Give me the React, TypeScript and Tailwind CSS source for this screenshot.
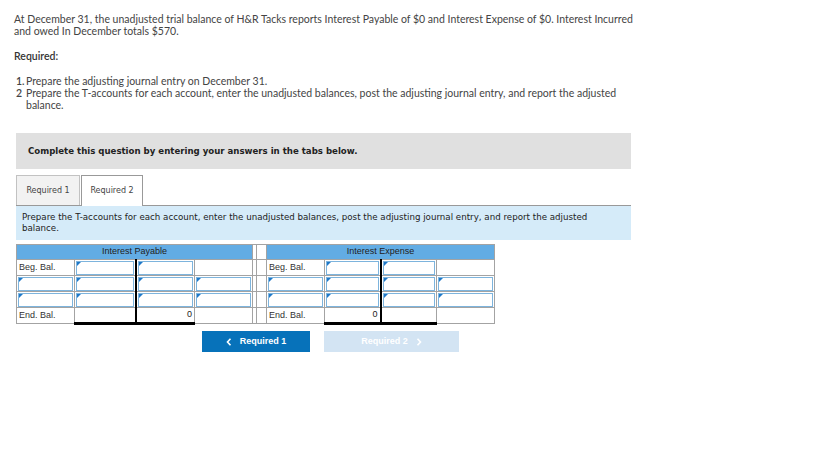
import React from 'react'

const body = { fontFamily: '"Lato", "Open Sans", sans-serif' }
const verdana = { fontFamily: '"DejaVu Sans", Verdana, sans-serif' }
const arial = { fontFamily: '"Liberation Sans", Arial, sans-serif' }

const InputBox = ({ value }: { value?: string }) => (
    <div className="relative h-[14px] mx-[1px] border border-[#7db4dd] bg-white text-right pr-[2px] leading-[12px]">
        <span className="absolute left-0 top-0 w-0 h-0 border-t-[4px] border-r-[4px] border-t-[#1f78c8] border-r-transparent" />
        {value}
    </div>
)

type Cell = { kind: 'label' | 'input' | 'empty' | 'value'; text?: string }

const Row = ({ cells, last }: { cells: Cell[]; last?: boolean }) => (
    <>
        {cells.map((c, i) => {
            const blackRight = i === 1 || i === 7
            const thickBottom = last && (i === 1 || i === 2 || i === 7 || i === 8)
            const gap = i === 4 || i === 5
            return (
                <td
                    key={i}
                    className={`h-4 p-0 border-[#a3a3a3] border ${blackRight ? 'border-r-2 border-r-black' : ''} ${thickBottom ? 'border-b-[3px] border-b-black' : ''} ${gap ? 'bg-white' : ''}`}
                >
                    {c.kind === 'label' && <span className="pl-[2px] text-[#333]">{c.text}</span>}
                    {c.kind === 'input' && <InputBox />}
                    {c.kind === 'value' && <div className="text-right pr-[2px]">{c.text}</div>}
                </td>
            )
        })}
    </>
)

const L = (t: string): Cell => ({ kind: 'label', text: t })
const I: Cell = { kind: 'input' }
const E: Cell = { kind: 'empty' }
const V = (t: string): Cell => ({ kind: 'value', text: t })

const App = () => {
    return (
        <div className="w-[830px] h-[461px] bg-white text-[#444]" style={body}>
            <div className="pl-[14px] pt-[13px] pr-4 text-[10.5px] leading-[12px]">
                <p>
                    At December 31, the unadjusted trial balance of H&amp;R Tacks reports Interest Payable of $0 and Interest Expense of $0. Interest Incurred
                    <br />
                    and owed In December totals $570.
                </p>
                <p className="mt-[13px] font-semibold text-[#333]">Required:</p>
                <ol className="mt-[13px] pl-[2px]">
                    <li className="flex">
                        <span className="w-[10px] shrink-0 font-semibold">1.</span>
                        <span>Prepare the adjusting journal entry on December 31.</span>
                    </li>
                    <li className="flex">
                        <span className="w-[10px] shrink-0 font-semibold">2</span>
                        <span>
                            Prepare the T-accounts for each account, enter the unadjusted balances, post the adjusting journal entry, and report the adjusted
                            <br />
                            balance.
                        </span>
                    </li>
                </ol>
            </div>

            <div className="ml-4 w-[615px] mt-[22px]">
                <div className="h-9 bg-[#e0e0e0] flex items-center pl-3 text-[8.6px] font-bold text-[#222]" style={verdana}>
                    Complete this question by entering your answers in the tabs below.
                </div>

                <div className="flex items-end mt-[6px] h-[31px] border-b border-[#999]" style={verdana}>
                    <div className="h-[30px] w-16 flex items-center justify-center bg-[#f2f2f2] border border-b-0 border-[#c2c2c2] text-[8px] text-[#444]">
                        Required 1
                    </div>
                    <div className="h-[31px] w-[62px] ml-[1px] -mb-px flex items-center justify-center bg-white border border-b-0 border-[#999] text-[8px] text-[#444]">
                        Required 2
                    </div>
                </div>

                <div className="bg-[#d5ebf9] h-[34px] pl-[6px] pt-[6px] text-[8.7px] leading-[11px] text-[#222]" style={verdana}>
                    Prepare the T-accounts for each account, enter the unadjusted balances, post the adjusting journal entry, and report the adjusted
                    <br />
                    balance.
                </div>

                <table className="mt-[4px] border-collapse table-fixed text-[9px] text-[#222]" style={arial}>
                    <colgroup>
                        <col className="w-[58px]" />
                        <col className="w-[61px]" />
                        <col className="w-[59px]" />
                        <col className="w-[58px]" />
                        <col className="w-[4px]" />
                        <col className="w-[10px]" />
                        <col className="w-[58px]" />
                        <col className="w-[56px]" />
                        <col className="w-[56px]" />
                        <col className="w-[58px]" />
                    </colgroup>
                    <tbody>
                        <tr>
                            <td colSpan={4} className="h-[15px] p-0 bg-[#62ace4] border border-[#a3a3a3] text-center">
                                Interest Payable
                            </td>
                            <td className="p-0 border border-[#a3a3a3]" />
                            <td className="p-0 border border-[#a3a3a3]" />
                            <td colSpan={4} className="h-[15px] p-0 bg-[#62ace4] border border-[#a3a3a3] text-center">
                                Interest Expense
                            </td>
                        </tr>
                        <tr>
                            <Row cells={[L('Beg. Bal.'), I, I, E, E, E, L('Beg. Bal.'), I, I, E]} />
                        </tr>
                        <tr>
                            <Row cells={[I, I, I, I, E, E, I, I, I, I]} />
                        </tr>
                        <tr>
                            <Row cells={[I, I, I, I, E, E, I, I, I, I]} />
                        </tr>
                        <tr>
                            <Row last cells={[L('End. Bal.'), E, V('0'), E, E, E, L('End. Bal.'), V('0'), E, E]} />
                        </tr>
                    </tbody>
                </table>

                <div className="flex mt-[6px] ml-[186px] gap-[14px]" style={arial}>
                    <button className="w-[108px] h-[21px] bg-[#0772ba] text-white text-[9px] font-bold flex items-center justify-center gap-2">
                        <svg width="6" height="8" viewBox="0 0 6 8" fill="none">
                            <path d="M4.5 0.8 L1.5 4 L4.5 7.2" stroke="white" strokeWidth="1.6" />
                        </svg>
                        Required 1
                    </button>
                    <button className="w-[135px] h-[21px] bg-[#d3e4f3] text-white text-[9px] font-bold flex items-center justify-center gap-2">
                        Required 2
                        <svg width="6" height="8" viewBox="0 0 6 8" fill="none">
                            <path d="M1.5 0.8 L4.5 4 L1.5 7.2" stroke="white" strokeWidth="1.6" />
                        </svg>
                    </button>
                </div>
            </div>
        </div>
    )
}

export default App
